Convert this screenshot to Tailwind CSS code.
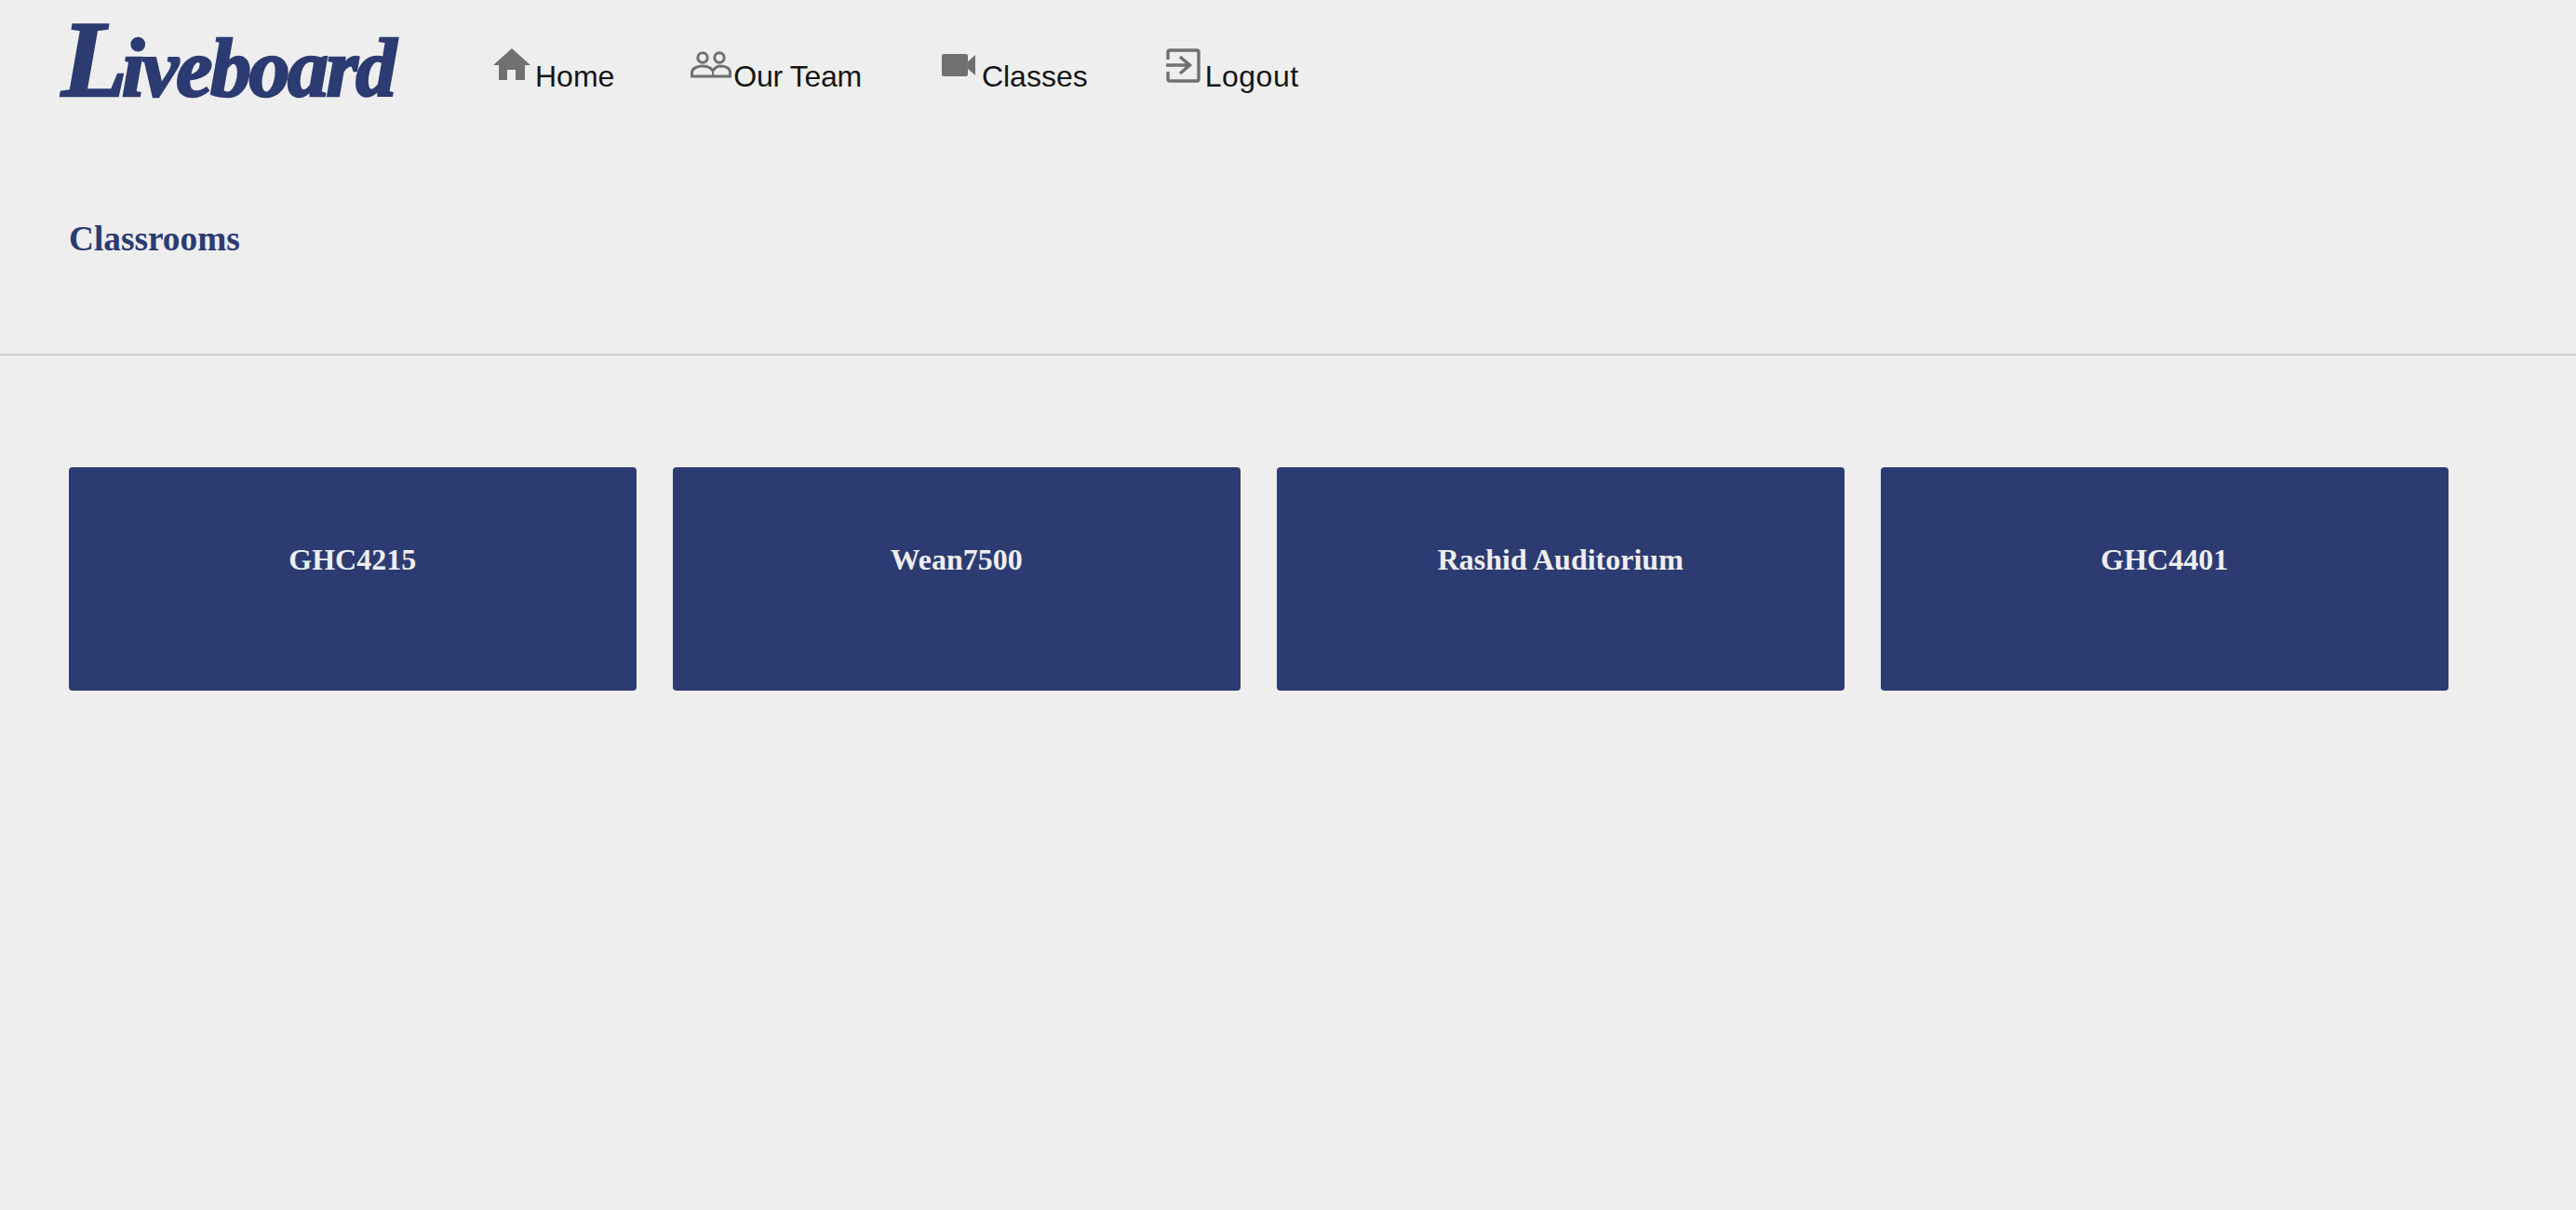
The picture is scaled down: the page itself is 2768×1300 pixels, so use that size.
<!DOCTYPE html>
<html lang="en">
<head>
  <meta charset="UTF-8" />
  <title>Liveboard</title>
  <script src="https://cdn.jsdelivr.net/npm/@tailwindcss/browser@4"></script>
</head>
<body class="bg-[#eeeeee] min-h-screen font-['Liberation_Sans',sans-serif]">
  <!-- Top nav -->
  <header class="flex items-start h-[140px] pl-[66px]">
    <div class="w-[464px] h-[120px] pt-[14px] leading-[100px] whitespace-nowrap text-[#2c3b72] font-['Liberation_Serif',serif] font-bold italic text-[88px] tracking-[-2.5px] [-webkit-text-stroke:2.5px_#2c3b72]"><span class="text-[116px] tracking-[-6px]">L</span>iveboard</div>
    <nav class="flex pt-[52px] text-[32px] leading-[36px] text-[#151515]">
      <a href="#" class="flex mr-[82px]">
        <svg class="w-[40px] h-[34px] mr-[5px]" viewBox="0 0 40 34" fill="#707070"><path d="M20 0 L40 18 H34 V34 H24 V23 H15 V34 H6 V18 H0 Z"/></svg>
        <span class="pt-[12px]">Home</span>
      </a>
      <a href="#" class="flex mr-[86px]">
        <svg class="w-[44px] h-[30px] mt-[3px] mr-[2px]" viewBox="0 0 44 30" fill="none" stroke="#707070" stroke-width="3"><circle cx="13" cy="7" r="5.2"/><circle cx="31" cy="7" r="5.2"/><path d="M1.5 27 V23 C1.5 18 8 16 13 16 C18 16 22 18 24 21 C26 18 29 16 32 16 C37 16 42.5 18 42.5 23 V27 Z"/><path d="M24 21 V27" stroke-width="2"/></svg>
        <span class="pt-[12px] tracking-[-0.3px]">Our Team</span>
      </a>
      <a href="#" class="flex mr-[84px]">
        <svg class="w-[36px] h-[24px] mt-[6px] mr-[7px]" viewBox="0 0 36 24" fill="#707070"><rect x="0" y="0" width="28" height="24" rx="2"/><path d="M27 9 L36 1 V23 L27 15 Z"/></svg>
        <span class="pt-[12px]">Classes</span>
      </a>
      <a href="#" class="flex">
        <svg class="w-[37px] h-[37px] mr-[5px]" viewBox="0 0 37 37" fill="none" stroke="#707070" stroke-width="3.4"><path d="M2 12 V4 Q2 2 4 2 H33 Q35 2 35 4 V33 Q35 35 33 35 H4 Q2 35 2 33 V25"/><path d="M0 18 H26 M15 9 L25.5 18 L15 27"/></svg>
        <span class="pt-[12px] tracking-[0.5px]">Logout</span>
      </a>
    </nav>
  </header>

  <!-- Page title -->
  <div class="h-[242px] border-b-2 border-[#cccccc] pl-[74px] pt-[96px]">
    <h1 class="font-['Liberation_Serif',serif] font-bold text-[37.3px] leading-[42px] text-[#2c3b72]">Classrooms</h1>
  </div>

  <!-- Classroom cards -->
  <main class="flex gap-[39.5px] pl-[74px] pt-[120px]">
    <div class="w-[609.5px] h-[240px] rounded-[4px] bg-[#2c3b72] pt-[80px] text-center font-['Liberation_Serif',serif] font-bold text-[32px] leading-[38px] text-[#eeeeee]">GHC4215</div>
    <div class="w-[609.5px] h-[240px] rounded-[4px] bg-[#2c3b72] pt-[80px] text-center font-['Liberation_Serif',serif] font-bold text-[32px] leading-[38px] text-[#eeeeee]">Wean7500</div>
    <div class="w-[609.5px] h-[240px] rounded-[4px] bg-[#2c3b72] pt-[80px] text-center font-['Liberation_Serif',serif] font-bold text-[32px] leading-[38px] text-[#eeeeee]">Rashid Auditorium</div>
    <div class="w-[609.5px] h-[240px] rounded-[4px] bg-[#2c3b72] pt-[80px] text-center font-['Liberation_Serif',serif] font-bold text-[32px] leading-[38px] text-[#eeeeee]">GHC4401</div>
  </main>
</body>
</html>
